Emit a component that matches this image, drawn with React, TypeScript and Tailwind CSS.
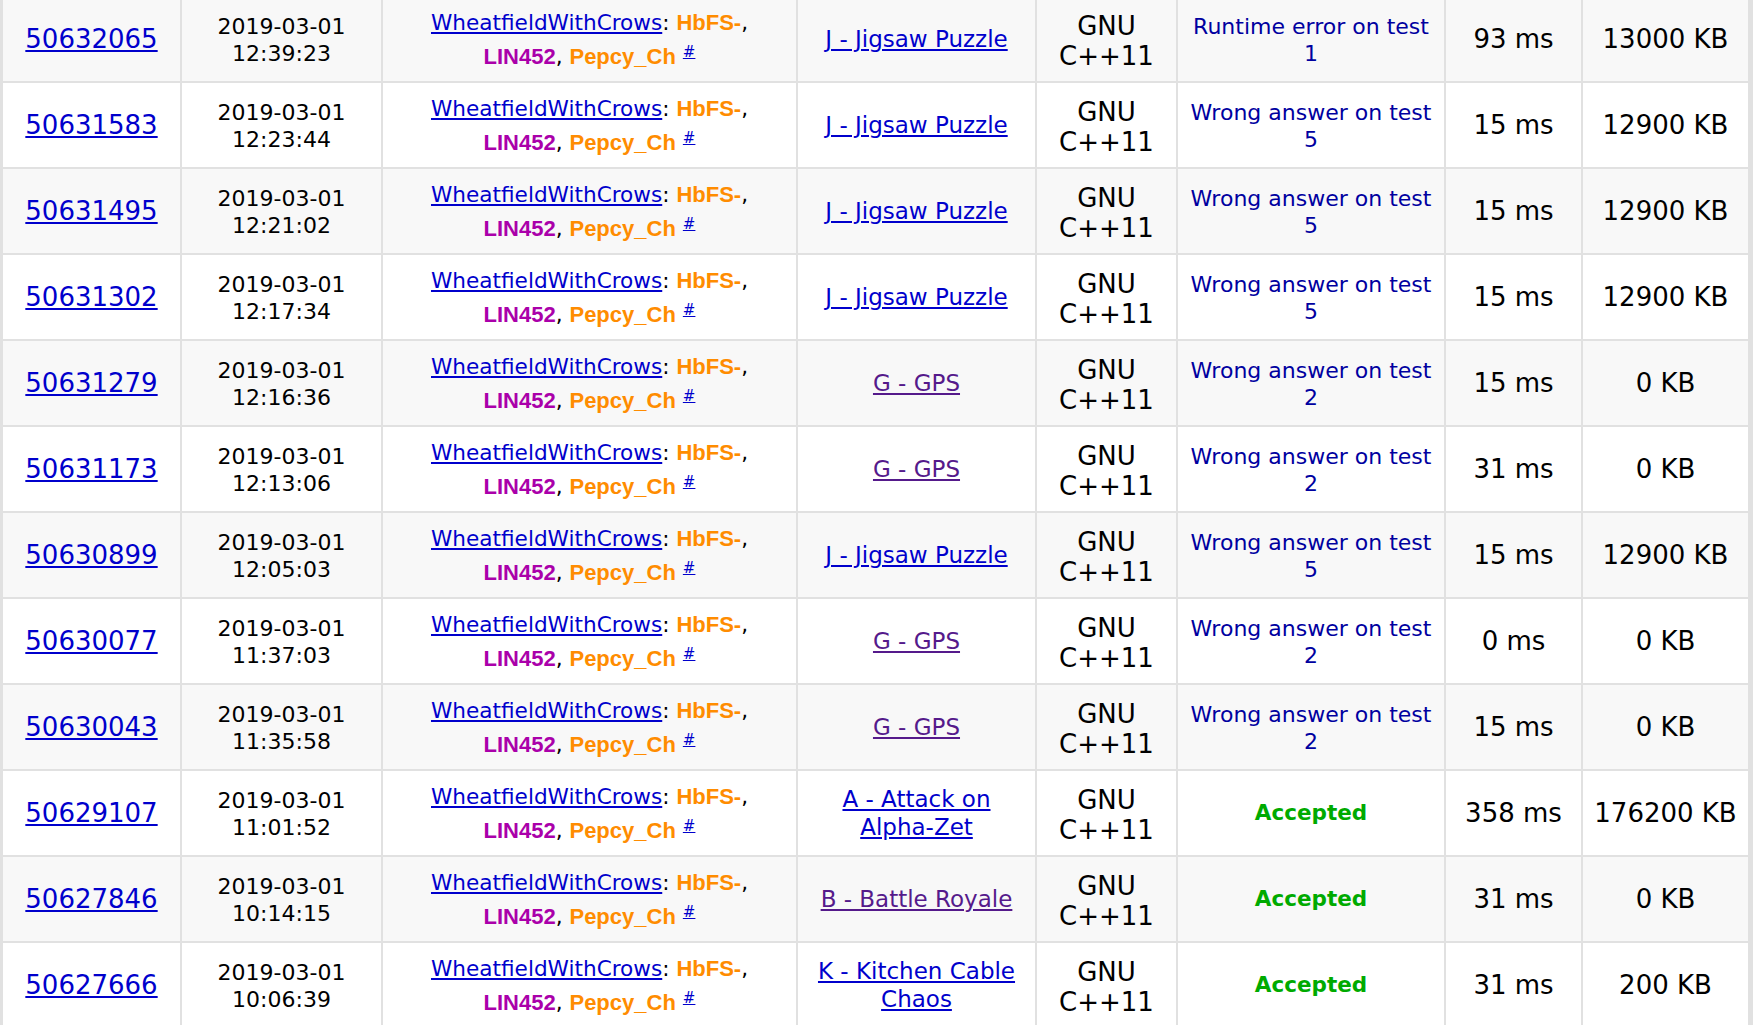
import React from 'react';

interface Submission {
  id: string;
  date: string;
  time: string;
  problem: string;
  visited: boolean;
  verdict: string;
  test?: string;
  runtime: string;
  memory: string;
}

const ROWS: Submission[] = [
  { id: '50632065', date: '2019-03-01', time: '12:39:23', problem: 'J - Jigsaw Puzzle', visited: false, verdict: 'Runtime error on test', test: '1', runtime: '93 ms', memory: '13000 KB' },
  { id: '50631583', date: '2019-03-01', time: '12:23:44', problem: 'J - Jigsaw Puzzle', visited: false, verdict: 'Wrong answer on test', test: '5', runtime: '15 ms', memory: '12900 KB' },
  { id: '50631495', date: '2019-03-01', time: '12:21:02', problem: 'J - Jigsaw Puzzle', visited: false, verdict: 'Wrong answer on test', test: '5', runtime: '15 ms', memory: '12900 KB' },
  { id: '50631302', date: '2019-03-01', time: '12:17:34', problem: 'J - Jigsaw Puzzle', visited: false, verdict: 'Wrong answer on test', test: '5', runtime: '15 ms', memory: '12900 KB' },
  { id: '50631279', date: '2019-03-01', time: '12:16:36', problem: 'G - GPS', visited: true, verdict: 'Wrong answer on test', test: '2', runtime: '15 ms', memory: '0 KB' },
  { id: '50631173', date: '2019-03-01', time: '12:13:06', problem: 'G - GPS', visited: true, verdict: 'Wrong answer on test', test: '2', runtime: '31 ms', memory: '0 KB' },
  { id: '50630899', date: '2019-03-01', time: '12:05:03', problem: 'J - Jigsaw Puzzle', visited: false, verdict: 'Wrong answer on test', test: '5', runtime: '15 ms', memory: '12900 KB' },
  { id: '50630077', date: '2019-03-01', time: '11:37:03', problem: 'G - GPS', visited: true, verdict: 'Wrong answer on test', test: '2', runtime: '0 ms', memory: '0 KB' },
  { id: '50630043', date: '2019-03-01', time: '11:35:58', problem: 'G - GPS', visited: true, verdict: 'Wrong answer on test', test: '2', runtime: '15 ms', memory: '0 KB' },
  { id: '50629107', date: '2019-03-01', time: '11:01:52', problem: 'A - Attack on Alpha-Zet', visited: false, verdict: 'Accepted', runtime: '358 ms', memory: '176200 KB' },
  { id: '50627846', date: '2019-03-01', time: '10:14:15', problem: 'B - Battle Royale', visited: true, verdict: 'Accepted', runtime: '31 ms', memory: '0 KB' },
  { id: '50627666', date: '2019-03-01', time: '10:06:39', problem: 'K - Kitchen Cable Chaos', visited: false, verdict: 'Accepted', runtime: '31 ms', memory: '200 KB' },
];

const cell = 'flex flex-col items-center justify-center text-center';
const handle = "font-['Liberation_Sans',Arial,sans-serif] font-bold text-[22px]";

function Party() {
  return (
    <div className="pt-[2px] text-[21.6px] leading-[34px]">
      <div>
        <a href="#" className="text-[#0000cc] underline">WheatfieldWithCrows</a>
        <span>: </span>
        <span className={`${handle} text-[#ff8c00]`}>HbFS-</span>
        <span>,</span>
      </div>
      <div>
        <span className={`${handle} text-[#aa00aa]`}>LIN452</span>
        <span>, </span>
        <span className={`${handle} text-[#ff8c00]`}>Pepcy_Ch</span>
        <sup className="ml-[7px] text-[15px]">
          <a href="#" className="text-[#0000cc] underline">#</a>
        </sup>
      </div>
    </div>
  );
}

export default function App() {
  return (
    <div className="h-screen overflow-hidden bg-white font-['DejaVu_Sans',Verdana,sans-serif] text-black">
      <div className="-mt-[3px] grid grid-cols-[177px_199px_413px_237px_139px_266px_135px_165px] auto-rows-[84px] gap-[2px] bg-[#e1e1e1] pl-[3px] pr-[5px]">
        {ROWS.map((row, i) => {
          const bg = i % 2 === 0 ? 'bg-[#f8f8f8]' : 'bg-white';
          return (
            <React.Fragment key={row.id}>
              <div className={`${cell} ${bg}`}>
                <a href="#" className="text-[26px] text-[#0000cc] underline">{row.id}</a>
              </div>
              <div className={`${cell} ${bg} pt-[2px] text-[22px] leading-[27px]`}>
                <span>{row.date}</span>
                <span>{row.time}</span>
              </div>
              <div className={`${cell} ${bg}`}>
                <Party />
              </div>
              <div className={`${cell} ${bg} px-2`}>
                <a
                  href="#"
                  className={`text-[23px] leading-[28px] underline ${row.visited ? 'text-[#551a8b]' : 'text-[#0000cc]'}`}
                >
                  {row.problem}
                </a>
              </div>
              <div className={`${cell} ${bg} pt-1 text-[26px] leading-[30px]`}>
                <span>GNU</span>
                <span>C++11</span>
              </div>
              <div className={`${cell} ${bg}`}>
                {row.test ? (
                  <div className="pt-[2px] text-[22px] leading-[27px] text-[#0000a0]">
                    <div>{row.verdict}</div>
                    <div>{row.test}</div>
                  </div>
                ) : (
                  <span className="text-[21.5px] font-bold text-[#00aa00]">{row.verdict}</span>
                )}
              </div>
              <div className={`${cell} ${bg} text-[26px]`}>{row.runtime}</div>
              <div className={`${cell} ${bg} text-[26px]`}>{row.memory}</div>
            </React.Fragment>
          );
        })}
      </div>
    </div>
  );
}
